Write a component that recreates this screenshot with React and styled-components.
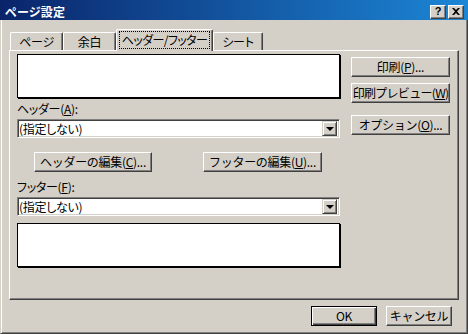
import React from 'react'
import styled, { createGlobalStyle } from 'styled-components'

const GlobalStyle = createGlobalStyle`
  html, body {
    margin: 0;
    padding: 0;
    background: #d4d0c8;
  }
  body {
    font-family: "Noto Sans CJK JP", "Noto Sans", sans-serif;
    font-size: 12px;
    color: #000;
  }
`

function App() {
    return (
        <>
            <GlobalStyle />
            <Window>
                <TitleBar>
                    <TitleText>ページ設定</TitleText>
                    <CaptionButtons>
                        <CapButton>?</CapButton>
                        <CapButton>
                            <svg width="8" height="7" viewBox="0 0 8 7">
                                <path d="M0 0h2l2 2 2-2h2L5 3.5 8 7H6L4 5 2 7H0l3-3.5z" fill="#000" />
                            </svg>
                        </CapButton>
                    </CaptionButtons>
                </TitleBar>
                <Body>
                    <TabRow>
                        <Tab $w={53}>ページ</Tab>
                        <Tab $w={53}>余白</Tab>
                        <Tab $w={97} $active><Focus>ヘッダー/フッター</Focus></Tab>
                        <Tab $w={50}>シート</Tab>
                    </TabRow>
                    <Panel>
                        <LeftCol>
                            <PreviewBox />
                            <FieldLabel>ヘッダー(<u>A</u>):</FieldLabel>
                            <Combo>
                                <ComboText>(指定しない)</ComboText>
                                <DropButton><Arrow /></DropButton>
                            </Combo>
                            <ButtonRow>
                                <Btn $w={118}>ヘッダーの編集(<u>C</u>)...</Btn>
                                <Btn $w={119}>フッターの編集(<u>U</u>)...</Btn>
                            </ButtonRow>
                            <FieldLabel $top={8}>フッター(<u>F</u>):</FieldLabel>
                            <Combo>
                                <ComboText>(指定しない)</ComboText>
                                <DropButton><Arrow /></DropButton>
                            </Combo>
                            <PreviewBox $top={7} />
                        </LeftCol>
                        <RightCol>
                            <Btn $w={99}>印刷(<u>P</u>)...</Btn>
                            <Btn $w={99} $top={6} $tight>印刷プレビュー(<u>W</u>)</Btn>
                            <Btn $w={99} $top={12}>オプション(<u>O</u>)...</Btn>
                        </RightCol>
                    </Panel>
                    <Footer>
                        <Btn $w={66} $default>OK</Btn>
                        <Btn $w={66}>キャンセル</Btn>
                    </Footer>
                </Body>
            </Window>
        </>
    )
}

export default App

const Window = styled.div`
    width: 468px;
    height: 334px;
    display: flex;
    flex-direction: column;
    background: #d4d0c8;
    overflow: hidden;
    font-feature-settings: "palt";
    letter-spacing: -0.3px;
`

const TitleBar = styled.div`
    height: 20px;
    box-sizing: border-box;
    padding: 3px 4px 0 5px;
    display: flex;
    align-items: center;
    background: linear-gradient(to right, #0a246a, #1c86d6);
    color: #fff;
    font-weight: bold;
`

const TitleText = styled.div`
    flex: 1;
    line-height: 14px;
    font-size: 12px;
    letter-spacing: 0.3px;
`

const CaptionButtons = styled.div`
    display: flex;
    gap: 2px;
`

const CapButton = styled.div`
    width: 16px;
    height: 14px;
    box-sizing: border-box;
    background: #d4d0c8;
    border: 1px solid;
    border-color: #fff #404040 #404040 #fff;
    box-shadow: inset -1px -1px 0 #808080;
    display: flex;
    align-items: center;
    justify-content: center;
    color: #000;
    font-family: "Liberation Sans", sans-serif;
    font-size: 11px;
    font-weight: bold;
    line-height: 1;
`

const Body = styled.div`
    flex: 1;
    display: flex;
    flex-direction: column;
    border-left: 1px solid #d4d0c8;
    border-right: 1px solid #404040;
    border-bottom: 1px solid #404040;
    box-shadow: inset 1px 0 0 #fff, inset -1px -1px 0 #808080;
    padding: 9px 8px 7px 8px;
`

const TabRow = styled.div`
    height: 21px;
    display: flex;
    align-items: flex-end;
    padding-left: 1px;
`

const Tab = styled.div`
    width: ${p => p.$w}px;
    height: ${p => (p.$active ? 22 : 18)}px;
    margin-bottom: ${p => (p.$active ? -1 : 0)}px;
    padding-bottom: ${p => (p.$active ? 2 : 0)}px;
    box-sizing: border-box;
    position: relative;
    z-index: ${p => (p.$active ? 2 : 1)};
    background: #d4d0c8;
    border-top: 1px solid #fff;
    border-left: 1px solid #fff;
    border-right: 1px solid #404040;
    box-shadow: inset -1px 0 0 #808080;
    border-top-left-radius: 2px;
    border-top-right-radius: 2px;
    display: flex;
    align-items: center;
    justify-content: center;
    line-height: 14px;
    white-space: nowrap;
`

const Focus = styled.span`
    border: 1px dotted #000;
    padding: 1px 2px;
    line-height: 14px;
    white-space: nowrap;
    letter-spacing: -0.6px;
`

const Panel = styled.div`
    height: 250px;
    box-sizing: border-box;
    border-top: 1px solid #fff;
    border-left: 1px solid #fff;
    border-right: 1px solid #404040;
    border-bottom: 1px solid #404040;
    box-shadow: inset -1px -1px 0 #808080;
    padding: 3px 8px 0 7px;
    display: flex;
    gap: 11px;
    align-items: flex-start;
`

const LeftCol = styled.div`
    width: 323px;
    display: flex;
    flex-direction: column;
`

const RightCol = styled.div`
    width: 99px;
    padding-top: 3px;
    display: flex;
    flex-direction: column;
`

const PreviewBox = styled.div`
    height: 44px;
    margin-top: ${p => p.$top || 0}px;
    box-sizing: border-box;
    background: #fff;
    border: 1px solid #000;
    box-shadow: 1px 1px 0 #000;
`

const FieldLabel = styled.div`
    margin-top: ${p => p.$top || 4}px;
    line-height: 14px;
`

const Combo = styled.div`
    margin-top: 3px;
    height: 19px;
    box-sizing: border-box;
    display: flex;
    align-items: stretch;
    background: #fff;
    border: 1px solid;
    border-color: #808080 #fff #fff #808080;
    box-shadow: inset 1px 1px 0 #404040, inset -1px -1px 0 #d4d0c8;
    padding: 1px 2px 1px 1px;
`

const ComboText = styled.div`
    flex: 1;
    display: flex;
    align-items: center;
    line-height: 14px;
`

const DropButton = styled.div`
    width: 15px;
    box-sizing: border-box;
    background: #d4d0c8;
    border: 1px solid;
    border-color: #d4d0c8 #404040 #404040 #d4d0c8;
    box-shadow: inset 1px 1px 0 #fff, inset -1px -1px 0 #808080;
    display: flex;
    align-items: center;
    justify-content: center;
`

const Arrow = styled.div`
    width: 0;
    height: 0;
    border-left: 4px solid transparent;
    border-right: 4px solid transparent;
    border-top: 4px solid #000;
`

const ButtonRow = styled.div`
    margin-top: 14px;
    padding-left: 17px;
    display: flex;
    gap: 51px;
`

const Btn = styled.button`
    width: ${p => p.$w}px;
    height: 20px;
    margin: ${p => p.$top || 0}px 0 0 0;
    padding: 0;
    box-sizing: border-box;
    background: #d4d0c8;
    font-family: inherit;
    font-size: 12px;
    line-height: 14px;
    letter-spacing: ${p => (p.$tight ? '-0.7px' : '-0.3px')};
    color: #000;
    display: flex;
    align-items: center;
    justify-content: center;
    white-space: nowrap;
    border: 1px solid;
    border-color: ${p => (p.$default ? '#000' : '#fff #404040 #404040 #fff')};
    box-shadow: ${p =>
        p.$default
            ? 'inset 1px 1px 0 #fff, inset -1px -1px 0 #404040, inset -2px -2px 0 #808080'
            : 'inset -1px -1px 0 #808080'};

    u {
        text-decoration: underline;
        text-underline-offset: 1px;
    }
`

const Footer = styled.div`
    margin-top: 6px;
    padding-right: 7px;
    display: flex;
    justify-content: flex-end;
    gap: 9px;
`
